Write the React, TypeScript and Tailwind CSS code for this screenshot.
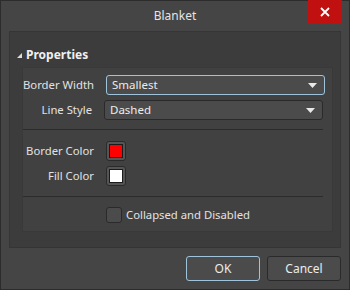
import React from 'react';

const font = { fontFamily: '"Noto Sans", "Open Sans", Arial, sans-serif' };

const Caret = () => (
  <svg width="9" height="5" viewBox="0 0 9 5" className="shrink-0">
    <path d="M0 0 H9 L4.5 5 Z" fill="#e8e8e8" />
  </svg>
);

const Select: React.FC<{ value: string; focused?: boolean }> = ({ value, focused }) => (
  <div
    className={`flex h-[20px] w-[219px] items-center justify-between rounded-[3px] border bg-[#4b4b4b] pl-[5px] pr-[7px] text-[11.5px] text-[#ececec] ${
      focused ? 'border-[#9fc3da]' : 'border-[#2a2a2a]'
    }`}
  >
    <span>{value}</span>
    <Caret />
  </div>
);

const Swatch: React.FC<{ color: string }> = ({ color }) => (
  <div className="flex h-[20px] w-[20px] items-center justify-center rounded-[3px] border border-[#2a2a2a] bg-[#555]">
    <div className={`h-[14px] w-[14px] border border-[#1c1c1c] ${color}`} />
  </div>
);

const Row: React.FC<{ label: string; children: React.ReactNode }> = ({ label, children }) => (
  <div className="flex items-center">
    <div className="w-[71px] whitespace-nowrap text-right text-[11.3px] text-[#e2e2e2]">{label}</div>
    <div className="ml-[12px]">{children}</div>
  </div>
);

export default function App() {
  return (
    <div
      className="flex h-[290px] w-[350px] flex-col border border-[#2c2c2c] bg-[#454545] text-[#e6e6e6]"
      style={font}
    >
      {/* Title bar */}
      <div className="relative flex h-[30px] shrink-0 items-center justify-center">
        <span className="text-[12px] text-[#e4e4e4]">Blanket</span>
        <div className="absolute right-[7px] top-[-1px] flex h-[23px] w-[34px] items-center justify-center bg-[#c01010]">
          <svg width="10" height="10" viewBox="0 0 10 10">
            <path d="M1 1 L9 9 M9 1 L1 9" stroke="#ffffff" strokeWidth="1.8" />
          </svg>
        </div>
      </div>

      {/* Properties panel */}
      <div className="mx-[8px] flex h-[217px] shrink-0 flex-col border border-[#353535] bg-[#3c3c3c] pt-[14px]">
        <div className="flex h-[18px] items-center pl-[7px]">
          <svg width="5" height="5" viewBox="0 0 5 5" className="mr-[4px]">
            <path d="M5 0 V5 H0 Z" fill="#dddddd" />
          </svg>
          <span className="text-[12px] font-bold text-[#f0f0f0]">Properties</span>
        </div>

        <div className="ml-[12px] mr-[7px] mt-[3px] flex flex-col border border-[#393939] bg-[#414141] pb-[8px] pr-[9px] pt-[7px]">
          <div className="flex flex-col gap-[5px]">
            <Row label="Border Width">
              <Select value="Smallest" focused />
            </Row>
            <Row label="Line Style">
              <Select value="Dashed" />
            </Row>
          </div>

          <div className="mt-[9px] h-px bg-[#2b2b2b]" />

          <div className="mt-[11px] flex flex-col gap-[5px]">
            <Row label="Border Color">
              <Swatch color="bg-[#ff0000]" />
            </Row>
            <Row label="Fill Color">
              <Swatch color="bg-white" />
            </Row>
          </div>

          <div className="mt-[10px] h-px bg-[#2b2b2b]" />

          <div className="mt-[10px] flex h-[16px] items-center pl-[83px]">
            <div className="h-[16px] w-[16px] rounded-[3px] border border-[#2a2a2a] bg-[#4b4b4b]" />
            <span className="ml-[4px] whitespace-nowrap text-[11.3px] text-[#e2e2e2]">Collapsed and Disabled</span>
          </div>
        </div>
      </div>

      {/* Buttons */}
      <div className="mt-[8px] flex justify-end gap-[7px] pr-[8px]">
        <button className="h-[25px] w-[74px] rounded-[3px] border border-[#9fc3da] bg-[#4b4b4b] text-[12px] text-[#ececec]">
          OK
        </button>
        <button className="h-[25px] w-[74px] rounded-[3px] border border-[#2a2a2a] bg-[#4b4b4b] text-[12px] text-[#ececec]">
          Cancel
        </button>
      </div>
    </div>
  );
}
